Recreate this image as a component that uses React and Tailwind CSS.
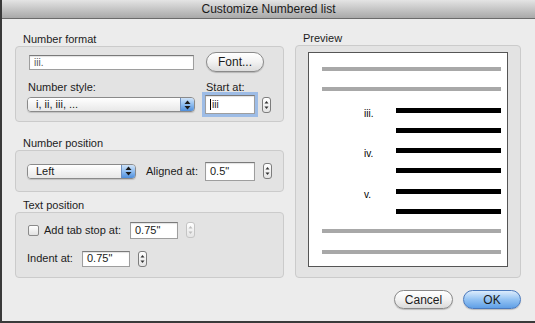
import React from "react";

const Arrows = ({ color = "#1a1a1a" }) => (
  <svg width="7" height="10" viewBox="0 0 7 10">
    <polygon points="3.5,0.5 6.5,4 0.5,4" fill={color} />
    <polygon points="0.5,6 6.5,6 3.5,9.5" fill={color} />
  </svg>
);

const Stepper = ({ disabled, h = "h-[16px]" }) => (
  <div
    className={`w-[9px] ${h} rounded-[3px] border flex items-center justify-center bg-gradient-to-b from-white to-[#e4e4e4] ${
      disabled ? "border-[#c4c4c4]" : "border-[#7d7d7d]"
    }`}
  >
    <svg width="5" height="10" viewBox="0 0 5 10">
      <polygon points="2.5,1 4.5,3.5 0.5,3.5" fill={disabled ? "#bdbdbd" : "#333"} />
      <polygon points="0.5,6.5 4.5,6.5 2.5,9" fill={disabled ? "#bdbdbd" : "#333"} />
    </svg>
  </div>
);

const Popup = ({ w, label }) => (
  <div
    className={`${w} h-[15px] flex rounded-[4px] border border-[#8a8a8a] overflow-hidden shadow-[0_1px_1px_rgba(0,0,0,0.15)]`}
  >
    <div className="flex-1 bg-gradient-to-b from-white to-[#e8e8e8] pl-[8px] leading-[13px] text-[11px] text-[#1a1a1a]">
      {label}
    </div>
    <div className="w-[14px] border-l border-[#6d8fc0] bg-gradient-to-b from-[#cfe3f8] via-[#8fbdf0] to-[#4f8fdc] flex items-center justify-center">
      <Arrows />
    </div>
  </div>
);

const Field = ({ w, h, children, focused }) => (
  <div
    className={`${w} ${h} bg-white border border-[#9e9e9e] border-t-[#7a7a7a] shadow-[inset_0_1px_1px_rgba(0,0,0,0.12)] pl-[4px] flex items-center text-[11px] text-[#1a1a1a] ${
      focused ? "ring-[3px] ring-[#9dbce6]" : ""
    }`}
  >
    {children}
  </div>
);

const Group = ({ h, children }) => (
  <div className={`${h} w-[269px] rounded-[4px] border border-[#cbcbcb] bg-[#e3e3e3]`}>{children}</div>
);

const Label = ({ children, className = "" }) => (
  <div className={`h-[14px] leading-[14px] pl-[8px] text-[11px] text-[#1c1c1c] ${className}`}>{children}</div>
);

export default function App() {
  const rows = [
    { type: "gray" },
    { type: "gray" },
    { type: "black", num: "iii." },
    { type: "black" },
    { type: "black", num: "iv." },
    { type: "black" },
    { type: "black", num: "v." },
    { type: "black" },
    { type: "gray" },
    { type: "gray" },
  ];
  return (
    <div className="w-[535px] h-[323px] bg-[#ececec] border-l-2 border-b-2 border-[#3a3a3a] flex flex-col overflow-hidden font-['Liberation_Sans',Arial,sans-serif] text-[11px] text-[#1c1c1c]">
      <div className="h-[19px] shrink-0 border-b border-[#6b6b6b] bg-gradient-to-b from-[#e4e4e4] to-[#a9a9a9] flex items-center justify-center text-[12px] text-[#1a1a1a]">
        Customize Numbered list
      </div>
      <div className="h-[259px] shrink-0 flex">
        <div className="pl-[13px] pt-[13px] flex flex-col">
          <Label>Number format</Label>
          <Group h="h-[76px]">
            <div className="pt-[5px] flex items-center h-[25px]">
              <Field w="w-[165px] ml-[13px]" h="h-[15px]">
                <span className="text-[10px] text-[#555]">iii.</span>
              </Field>
              <div className="ml-[12px] w-[58px] h-[20px] rounded-full border border-[#8a8a8a] bg-gradient-to-b from-white via-[#f2f2f2] to-[#dcdcdc] shadow-[0_1px_1px_rgba(0,0,0,0.2)] flex items-center justify-center text-[12px] text-[#1a1a1a]">
                Font...
              </div>
            </div>
            <div className="mt-[9px] h-[12px] flex leading-[12px]">
              <div className="ml-[12px] w-[178px]">Number style:</div>
              <div>Start at:</div>
            </div>
            <div className="mt-[2px] h-[19px] flex items-center">
              <Popup w="w-[168px] ml-[11px]" label="i, ii, iii, ..." />
              <Field w="w-[50px] ml-[10px]" h="h-[19px]" focused>
                <span className="w-px h-[11px] bg-black mr-[1px]" />
                <span className="text-[10px]">iii</span>
              </Field>
              <div className="ml-[7px]">
                <Stepper />
              </div>
            </div>
          </Group>
          <Label className="mt-[14px]">Number position</Label>
          <Group h="h-[42px]">
            <div className="h-full flex items-center">
              <Popup w="w-[109px] ml-[11px]" label="Left" />
              <div className="ml-[10px] w-[59px]">Aligned at:</div>
              <Field w="w-[50px]" h="h-[19px]">0.5&quot;</Field>
              <div className="ml-[8px]">
                <Stepper />
              </div>
            </div>
          </Group>
          <Label className="mt-[6px]">Text position</Label>
          <Group h="h-[66px]">
            <div className="pt-[8px] h-[26px] flex items-center">
              <div className="ml-[12px] w-[11px] h-[11px] rounded-[2px] border border-[#8a8a8a] bg-gradient-to-b from-white to-[#e2e2e2]" />
              <div className="ml-[5px] w-[86px]">Add tab stop at:</div>
              <Field w="w-[48px]" h="h-[17px]">0.75&quot;</Field>
              <div className="ml-[8px]">
                <Stepper disabled />
              </div>
            </div>
            <div className="mt-[11px] h-[17px] flex items-center">
              <div className="ml-[11px] w-[55px]">Indent at:</div>
              <Field w="w-[48px]" h="h-[16px]">0.75&quot;</Field>
              <div className="ml-[8px]">
                <Stepper />
              </div>
            </div>
          </Group>
        </div>
        <div className="ml-[11px] pt-[12px] flex flex-col">
          <Label>Preview</Label>
          <div className="w-[226px] h-[233px] rounded-[4px] border border-[#cbcbcb] bg-[#e3e3e3] pt-[6px] pl-[12px]">
            <div className="w-[200px] h-[215px] bg-white border border-[#555] pt-[14px]">
              {rows.map((r, i) => (
                <div key={i} className="h-[20.3px] relative">
                  {r.type === "gray" ? (
                    <div className="ml-[13px] w-[179px] h-[4px] bg-[#a8a8a8]" />
                  ) : (
                    <div className="flex items-start">
                      <div className="w-[87px] pl-[55px] mt-[1px] leading-[10px] text-[10px] text-black">{r.num || ""}</div>
                      <div className="w-[105px] h-[5px] bg-black" />
                    </div>
                  )}
                </div>
              ))}
            </div>
          </div>
        </div>
      </div>
      <div className="pt-[12px] pr-[14px] flex justify-end gap-[10px]">
        <div className="w-[59px] h-[19px] rounded-full border border-[#8a8a8a] bg-gradient-to-b from-white via-[#f2f2f2] to-[#dadada] shadow-[0_1px_1px_rgba(0,0,0,0.2)] flex items-center justify-center text-[12px] text-[#1a1a1a]">
          Cancel
        </div>
        <div className="w-[58px] h-[19px] rounded-full border border-[#4a79bd] bg-gradient-to-b from-[#dcecfc] via-[#94c3f3] to-[#5f9fe6] shadow-[0_1px_1px_rgba(0,0,0,0.2)] flex items-center justify-center text-[12px] text-[#1a1a1a]">
          OK
        </div>
      </div>
    </div>
  );
}
